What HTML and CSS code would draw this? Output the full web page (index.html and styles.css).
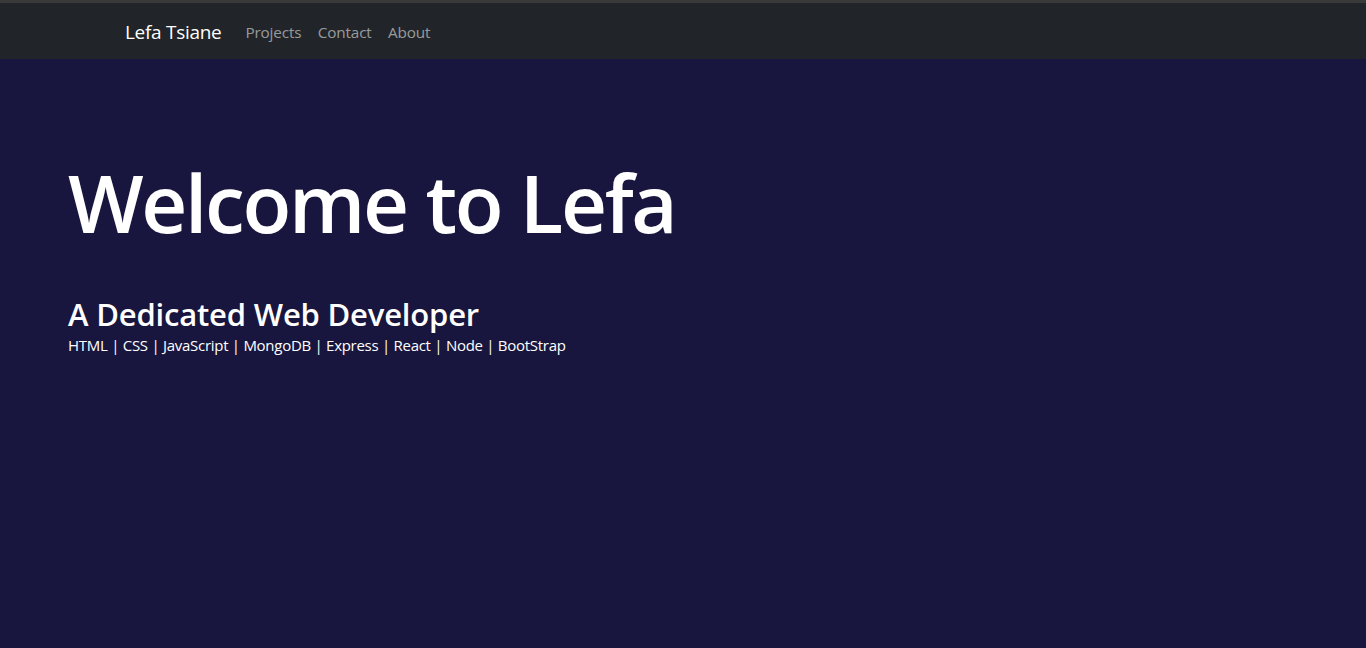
FILE: index.html
```html
<!DOCTYPE html>
<html lang="en">
<head>
<meta charset="utf-8">
<title>Lefa Tsiane</title>
<link rel="stylesheet" href="styles.css">
</head>
<body>
<div class="topline"></div>
<nav class="navbar">
  <div class="container">
    <a class="brand" href="#">Lefa Tsiane</a>
    <ul class="nav">
      <li><a href="#">Projects</a></li>
      <li><a href="#">Contact</a></li>
      <li><a href="#">About</a></li>
    </ul>
  </div>
</nav>
<main class="hero">
  <h1 class="title">Welcome to Lefa</h1>
  <h2 class="subtitle">A Dedicated Web Developer</h2>
  <p class="skills">HTML | CSS | JavaScript | MongoDB | Express | React | Node | BootStrap</p>
</main>
</body>
</html>
```
FILE: styles.css
```css
* { box-sizing: border-box; }
html, body { margin: 0; padding: 0; height: 100%; }
body {
  background: #18163e;
  font-family: "Open Sans", "Noto Sans", sans-serif;
  color: #fff;
  display: flex;
  flex-direction: column;
}
.topline { height: 3px; background: #3a3a3a; flex: none; }
.navbar { background: #212529; height: 56px; flex: none; display: flex; align-items: center; padding-top: 1px; }
.container { width: 1140px; margin: 0 auto; padding: 0 12px; display: flex; align-items: center; }
.brand { color: #fff; text-decoration: none; font-size: 19px; margin-right: 16px; letter-spacing: -0.3px; }
.nav { list-style: none; margin: 0; padding: 0; display: flex; }
.nav a { display: block; padding: 0 8.2px; color: rgba(255,255,255,.55); text-decoration: none; font-size: 15.3px; letter-spacing: -0.15px; }
.nav li:first-child a { padding-left: 8px; }
.hero { padding: 95px 68px 0; flex: 1; }
.title { margin: 0; font-size: 80px; font-weight: 600; line-height: 1.2; letter-spacing: -2.3px; }
.subtitle { margin: 46px 0 0; font-size: 31px; font-weight: 600; line-height: 1.2; letter-spacing: -0.18px; }
.skills { margin: 1px 0 0; font-size: 15px; letter-spacing: -0.28px; line-height: 1.5; }
```
